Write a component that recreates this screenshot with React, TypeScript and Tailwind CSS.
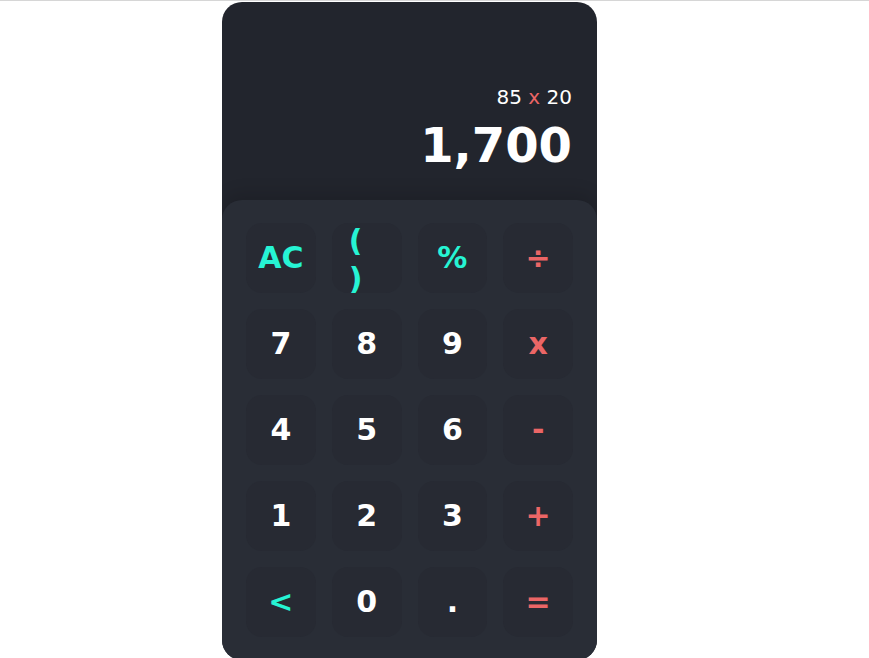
const keys: { label: string; tone: 'num' | 'fn' | 'op' }[] = [
  { label: 'AC', tone: 'fn' },
  { label: '( )', tone: 'fn' },
  { label: '%', tone: 'fn' },
  { label: '÷', tone: 'op' },
  { label: '7', tone: 'num' },
  { label: '8', tone: 'num' },
  { label: '9', tone: 'num' },
  { label: 'x', tone: 'op' },
  { label: '4', tone: 'num' },
  { label: '5', tone: 'num' },
  { label: '6', tone: 'num' },
  { label: '-', tone: 'op' },
  { label: '1', tone: 'num' },
  { label: '2', tone: 'num' },
  { label: '3', tone: 'num' },
  { label: '+', tone: 'op' },
  { label: '<', tone: 'fn' },
  { label: '0', tone: 'num' },
  { label: '.', tone: 'num' },
  { label: '=', tone: 'op' },
];

const toneClass = {
  num: 'text-white',
  fn: 'text-[#26f4d4]',
  op: 'text-[#eb6666]',
};

const App = () => {
  return (
    <div className="min-h-screen bg-white border-t border-[#d6d6d6] font-['DejaVu_Sans',sans-serif]">
      <div className="ml-[222px] mt-px w-[375px] h-[658px] bg-[#22252d] rounded-[20px] overflow-hidden flex flex-col">
        {/* display */}
        <div className="h-[198px] flex flex-col items-end justify-end pr-[25px] pb-[31px]">
          <div className="text-[20px] leading-none text-white mb-[14px]">
            85 <span className="text-[#eb6666]">x</span> 20
          </div>
          <div className="text-[48px] leading-none font-bold text-white">1,700</div>
        </div>

        {/* keypad */}
        <div className="flex-1 bg-[#292d36] rounded-t-[20px] shadow-[0_-8px_16px_rgba(0,0,0,0.12)] px-6 pt-[23px]">
          <div className="grid grid-cols-4 gap-4">
            {keys.map(k => (
              <button
                key={k.label}
                className={`h-[70px] rounded-2xl bg-[#272a33] text-[30px] font-bold leading-[1.25] flex items-center justify-center ${k.label === '( )' ? 'text-left pl-[17px] pr-[20px] pt-[3px]' : 'text-center px-5'} ${toneClass[k.tone]}`}
              >
                {k.label}
              </button>
            ))}
          </div>
        </div>
      </div>
    </div>
  );
};

export default App;
